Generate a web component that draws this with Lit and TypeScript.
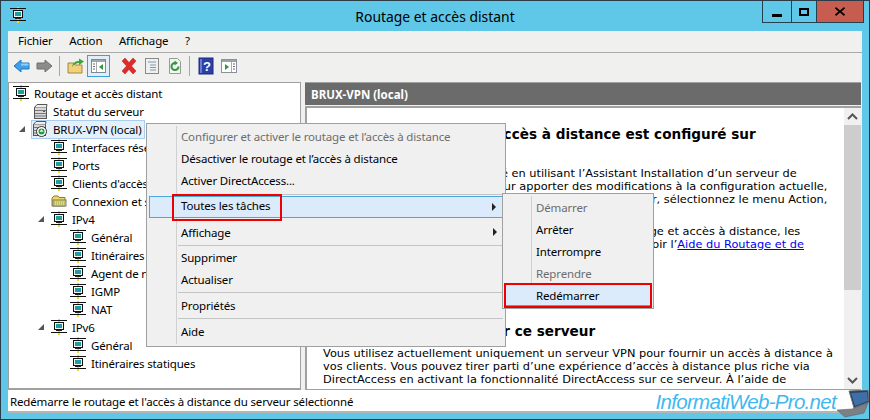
import { LitElement, html, css, svg } from "lit";
import { customElement } from "lit/decorators.js";

const netIcon = html`<svg class="ico" width="16" height="16" viewBox="0 0 16 16">
  <rect x="7" y="0" width="2" height="16" fill="#e8e020"/>
  <rect x="0" y="1" width="16" height="1" fill="#111"/>
  <rect x="3.5" y="3.5" width="9" height="7" fill="#f4f4f0" stroke="#111"/>
  <rect x="5" y="5" width="6" height="4" fill="#1f9c9c"/>
  <rect x="5" y="11" width="6" height="1" fill="#222"/>
  <rect x="0" y="13" width="16" height="1" fill="#111"/>
</svg>`;

const serverIcon = svg`<rect x="2.5" y="4.5" width="12" height="11" fill="#d8d8d8" stroke="#555"/>
  <path d="M2.5 4.5 5 1.5H15L14.5 4.5" fill="#eee" stroke="#555"/>
  <path d="M3 7.5H14M3 10.5H14M3 13H14" stroke="#777"/>
  <rect x="11" y="8" width="2" height="1" fill="#a33"/>`;

const statusIcon = html`<svg class="ico" width="16" height="16" viewBox="0 0 16 16">${serverIcon}</svg>`;

const bruxIcon = html`<svg class="ico" width="16" height="16" viewBox="0 0 16 16">
  <g transform="translate(-1 -1)">${serverIcon}</g>
  <circle cx="9.5" cy="10.5" r="5" fill="#fff" stroke="#333"/>
  <circle cx="9.5" cy="10.5" r="3" fill="#1d9a3a"/>
  <path d="M9.5 8.3 11.5 10.8H7.5Z" fill="#fff"/>
</svg>`;

const connIcon = html`<svg class="ico" width="16" height="16" viewBox="0 0 16 16">
  <path d="M1 5 3 3H7L8 4.5H14V13H1Z" fill="#f1d76a" stroke="#8d7a33"/>
  <rect x="2" y="7" width="13" height="6" fill="#e6e23a" stroke="#777"/>
  <path d="M3 9H14M3 11H14" stroke="#999" stroke-dasharray="1 1"/>
</svg>`;

const tools = {
  back: svg`<path d="M1 9 8 3V6H16V12H8V15Z" fill="#3f9fe8" stroke="#1e78c0"/><path d="M8 6.5H15.5V8.5H8Z" fill="#8fd0f8"/>`,
  forward: svg`<path d="M16 9 9 3V6H1V12H9V15Z" fill="#8c8c8c" stroke="#6f6f6f"/>`,
  up: svg`<path d="M1 6H7L8 8H15V16H1Z" fill="#efd27a" stroke="#a58a3e"/><path d="M5 10C6 5 9 4 12 4V1.500L17 4.500 12 8V6C10 6 7 7 5 10Z" fill="#3aa53a"/>`,
  tree: svg`<rect x="1.500" y="2.500" width="14" height="13" fill="#fff" stroke="#7c8a92"/><rect x="2" y="3" width="13" height="2" fill="#9aa8b0"/><path d="M6.500 5V15" stroke="#aaa"/><path d="M3 7H5M3 9.500H5M3 12H5" stroke="#667"/><path d="M13 7V13L9 10Z" fill="#2c9a3a"/>`,
  del: svg`<path d="M2 4 5 1 9 5.500 13 1 16 4 11.500 9 16 14 13 17 9 12.500 5 17 2 14 6.500 9Z" fill="#e02a2a" stroke="#b51c1c" stroke-width=".5"/>`,
  props: svg`<rect x="2.500" y="1.500" width="13" height="15" fill="#f0f0f0" stroke="#8a8a8a"/><path d="M5 5H13M7 8H13M7 10.500H13M7 13H13" stroke="#7d9ab0"/>`,
  refresh: svg`<path d="M3.500 1.500H11.500L14.500 4.500V16.500H3.500Z" fill="#f4f4f4" stroke="#999"/><path d="M12.500 9.500A3.500 3.500 0 1 1 9 6" fill="none" stroke="#2c9a3a" stroke-width="2"/><path d="M8.500 3.500 12 6 8.500 8.500Z" fill="#2c9a3a"/>`,
  help: svg`<rect x="2" y="1" width="14" height="16" fill="#2a3fa8" stroke="#1b2a7a"/><rect x="3" y="2" width="2" height="14" fill="#6d7bd0"/><text x="9.800" y="14" font-family="Liberation Sans" font-size="13" font-weight="700" fill="#fff" text-anchor="middle">?</text>`,
  action: svg`<rect x="1.500" y="2.500" width="15" height="13" fill="#fff" stroke="#8a9198"/><rect x="2" y="3" width="14" height="2" fill="#9aa4aa"/><path d="M11.500 5V15" stroke="#aaa"/><path d="M13 7H15M13 9.500H15M13 12H15" stroke="#667"/><path d="M5 7V13L9 10Z" fill="#2c9a3a"/>`,
};

const tool = (p: unknown, cls = "") =>
  html`<span class="tool ${cls}"><svg width="18" height="18" viewBox="0 0 18 18">${p}</svg></span>`;

type Row = { label: string; depth: number; icon: unknown; arrow?: boolean; selected?: boolean };

const rows: Row[] = [
  { label: "Routage et accès distant", depth: 0, icon: netIcon },
  { label: "Statut du serveur", depth: 1, icon: statusIcon },
  { label: "BRUX-VPN (local)", depth: 1, icon: bruxIcon, arrow: true, selected: true },
  { label: "Interfaces réseau", depth: 2, icon: netIcon },
  { label: "Ports", depth: 2, icon: netIcon },
  { label: "Clients d'accès distant", depth: 2, icon: netIcon },
  { label: "Connexion et stratégies", depth: 2, icon: connIcon },
  { label: "IPv4", depth: 2, icon: netIcon, arrow: true },
  { label: "Général", depth: 3, icon: netIcon },
  { label: "Itinéraires statiques", depth: 3, icon: netIcon },
  { label: "Agent de relais", depth: 3, icon: netIcon },
  { label: "IGMP", depth: 3, icon: netIcon },
  { label: "NAT", depth: 3, icon: netIcon },
  { label: "IPv6", depth: 2, icon: netIcon, arrow: true },
  { label: "Général", depth: 3, icon: netIcon },
  { label: "Itinéraires statiques", depth: 3, icon: netIcon },
];

@customElement("app-root")
export class AppRoot extends LitElement {
  static styles = css`
    :host {
      display: block;
      width: 870px;
      height: 420px;
      font-family: "Noto Sans", "Open Sans", sans-serif;
      font-size: 11.5px;
      letter-spacing: -0.15px;
      color: #000;
    }
    .window {
      position: relative;
      box-sizing: border-box;
      width: 870px;
      height: 420px;
      border: 1px solid #2b3c48;
      background: #5fc7e8;
      display: flex;
      flex-direction: column;
      padding: 0 7px 6px 7px;
      overflow: hidden;
    }
    .title {
      height: 30px;
      flex: none;
      display: flex;
      align-items: center;
      justify-content: center;
      font-size: 13.9px;
      letter-spacing: 0;
      position: relative;
    }
    .title .ico { position: absolute; left: 2px; top: 6px; }
    .caption {
      position: absolute;
      top: 0;
      right: -2px;
      display: flex;
      height: 21px;
      border: 1px solid #24404f;
      border-top: 0;
    }
    .caption span {
      display: flex;
      align-items: center;
      justify-content: center;
      width: 28px;
      border-right: 1px solid #24404f;
    }
    .caption span:nth-child(2) { width: 24px; }
    .caption span:last-child {
      width: 46px;
      border-right: 0;
      background: #c75c50;
    }
    .client {
      flex: 1;
      display: flex;
      flex-direction: column;
      background: #f0f0ee;
      min-height: 0;
    }
    .menu {
      height: 22px;
      display: flex;
      align-items: center;
      gap: 16.500px;
      padding: 0 0 2px 10px;
      box-sizing: border-box;
      border-bottom: 1px solid #aaa;
      flex: none;
    }
    .toolbar {
      height: 29px;
      flex: none;
      display: flex;
      align-items: center;
      padding: 0 0 3px 2px;
      box-sizing: border-box;
    }
    .tool {
      width: 23px;
      height: 22px;
      display: flex;
      align-items: center;
      justify-content: center;
      box-sizing: border-box;
    }
    .tool.on {
      background: #e1eefa;
      border: 1px solid #3c9fd8;
    }
    .sep {
      width: 1px;
      height: 20px;
      background: #a8a8a8;
      margin: 0 4px 0 3px;
    }
    .spacer { width: 7px; }
    .panes {
      flex: 1;
      display: flex;
      min-height: 0;
      gap: 4px;
    }
    .tree {
      width: 293px;
      flex: none;
      background: #fff;
      border: 1px solid #a0a0a0;
      border-width: 1px 1px 2px 1px;
      padding-top: 1px;
      box-sizing: border-box;
      overflow: hidden;
    }
    .row {
      height: 18px;
      display: flex;
      align-items: center;
      white-space: nowrap;
      position: relative;
    }
    .row .ico { flex: none; margin-right: 4px; }
    .row .text { padding: 0 1px; }
    .row.selected .wrap {
      display: flex;
      align-items: center;
      background: #e4f0fb;
      border: 1px solid #a9cdea;
      height: 17px;
      margin-left: -1px;
      padding-right: 2px;
    }
    .arrow { position: absolute; top: 5px; }
    .detail {
      flex: 1;
      min-width: 0;
      display: flex;
      flex-direction: column;
      border-top: 1px solid #a0a0a0;
      margin-right: 1px;
    }
    .head {
      height: 22px;
      flex: none;
      background: #6b6b6b;
      color: #fff;
      font-weight: 700;
      letter-spacing: 0;
      padding-left: 6px;
      display: flex;
      align-items: center;
    }
    .view {
      flex: 1;
      min-height: 0;
      margin-top: 1px;
      border: 2px solid #a0a0a0;
      border-right: 0;
      border-bottom: 1px solid #a0a0a0;
      background: #fff;
      display: flex;
    }
    .body {
      flex: 1;
      min-width: 0;
      overflow: hidden;
      padding: 17px 0 0 16px;
      font-family: "DejaVu Sans", sans-serif;
      font-size: 11.35px;
      letter-spacing: 0;
      line-height: 13px;
      white-space: nowrap;
    }
    .body h2 {
      margin: 0;
      font-size: 13.6px;
      line-height: 18px;
      font-weight: 700;
    }
    .body a { color: #0000ee; }
    .para1 { margin-top: 24px; }
    .para2 { margin-top: 19px; }
    .body .h2b { margin-top: 71px; }
    .para3 { margin-top: 7px; }
    .scroll {
      width: 17px;
      flex: none;
      background: #f0f0f0;
      display: flex;
      flex-direction: column;
    }
    .scroll .btn {
      height: 17px;
      flex: none;
      display: flex;
      align-items: center;
      justify-content: center;
    }
    .scroll .track { flex: 1; }
    .scroll .thumb { height: 165px; background: #cdcdcd; }
    .status {
      height: 23px;
      flex: none;
      background: #fff;
      display: flex;
      align-items: center;
      padding: 2px 0 0 2px;
      border-bottom: 2px solid #b5b5b5;
      box-sizing: border-box;
    }
    .ctx {
      position: absolute;
      background: #f0f0f0;
      border: 1px solid #a0a0a0;
      box-sizing: border-box;
      padding: 1px 2px;
      display: flex;
      flex-direction: column;
    }
    .ctx::before {
      content: "";
      position: absolute;
      top: 2px;
      bottom: 2px;
      left: 29px;
      width: 1px;
      background: #d0d0d0;
    }
    .ctx.main { left: 145px; top: 122px; width: 360px; height: 224px; }
    .ctx.sub { left: 501px; top: 192px; width: 152px; height: 116px; padding-top: 2px; }
    .ctx.sub::before { left: 28px; }
    .item {
      height: 22px;
      flex: none;
      display: flex;
      align-items: center;
      padding-left: 32px;
      position: relative;
      box-sizing: border-box;
      white-space: nowrap;
    }
    .sub .item { padding-left: 31px; }
    .item.off { color: #6d6d6d; }
    .item.hi {
      background: #dcebfb;
      border: 1px solid #4aa6dc;
      padding-left: 31px;
      padding-bottom: 3px;
    }
    .sub .item.hi { padding: 0 0 0 30px; }
    .item.after { margin-top: 3px; }
    .item .caret {
      position: absolute;
      right: 6px;
      top: 50%;
      margin-top: -4px;
      width: 0;
      height: 0;
      border-left: 4px solid #222;
      border-top: 4px solid transparent;
      border-bottom: 4px solid transparent;
    }
    .ctx hr {
      margin: 2px 0 1px 29px;
      border: 0;
      height: 1px;
      background: #c4c4c4;
      flex: none;
    }
    .ctx hr.first { margin-top: 3px; }
    .ctx hr.tight { margin: 2px 0 0 29px; }
    .mark {
      position: absolute;
      border: 2px solid #ee0000;
      box-sizing: border-box;
      pointer-events: none;
    }
    .mark.a { left: 171px; top: 193px; width: 110px; height: 27px; }
    .mark.b { left: 503px; top: 282px; width: 148px; height: 25px; }
    .brand {
      position: absolute;
      right: 33px;
      bottom: 5px;
      font-family: "Liberation Sans", sans-serif;
      font-style: italic;
      font-size: 20.5px;
      line-height: 24px;
      color: #3fb8f0;
      letter-spacing: -0.7px;
      white-space: nowrap;
      text-shadow: 0 0 2px #fff, 0 0 2px #fff;
    }
    .laptop { position: absolute; right: 0; bottom: 1px; }
  `;

  render() {
    return html`
      <div class="window">
        <div class="title">
          ${netIcon}
          <span>Routage et accès distant</span>
          <div class="caption">
            <span><svg width="10" height="10" viewBox="0 0 10 10"><rect y="7" width="10" height="3"/></svg></span>
            <span><svg width="10" height="8" viewBox="0 0 10 8"><path d="M1 1H9V7H1Z" fill="none" stroke="#000" stroke-width="2"/></svg></span>
            <span><svg width="10" height="9" viewBox="0 0 10 9"><path d="M1 0 5 3.500 9 0 10 1.500 6.500 4.500 10 7.500 9 9 5 5.500 1 9 0 7.500 3.500 4.500 0 1.500Z"/></svg></span>
          </div>
        </div>
        <div class="client">
          <div class="menu">
            <span>Fichier</span><span>Action</span><span>Affichage</span><span>?</span>
          </div>
          <div class="toolbar">
            ${tool(tools.back)}${tool(tools.forward)}<i class="sep"></i>
            ${tool(tools.up)}${tool(tools.tree, "on")}<i class="spacer"></i>
            ${tool(tools.del)}${tool(tools.props)}${tool(tools.refresh)}<i class="sep"></i>
            ${tool(tools.help)}${tool(tools.action)}
          </div>
          <div class="panes">
            <div class="tree">${rows.map((r) => this.renderRow(r))}</div>
            <div class="detail">
              <div class="head">BRUX-VPN (local)</div>
              <div class="view">
                <div class="body">
                  <h2>Le service Routage et accès à distance est configuré sur</h2>
                  <div class="para1">
                    <div>Ce serveur est ensuite configuré en utilisant l’Assistant Installation d’un serveur de</div>
                    <div>Routage et accès à distance. Pour apporter des modifications à la configuration actuelle,</div>
                    <div>ajouter des rôles ou modifier les paramètres de ce serveur, sélectionnez le menu Action,</div>
                  </div>
                  <div class="para2">
                    <div>Pour obtenir davantage d’informations à propos du Routage et accès à distance, les</div>
                    <div>Scénarios de déploiement et la résolution des incidents, voir l’<a href="#">Aide du Routage et de</a></div>
                  </div>
                  <h2 class="h2b">Activer DirectAccess sur ce serveur</h2>
                  <div class="para3">
                    <div>Vous utilisez actuellement uniquement un serveur VPN pour fournir un accès à distance à</div>
                    <div>vos clients. Vous pouvez tirer parti d’une expérience d’accès à distance plus riche via</div>
                    <div>DirectAccess en activant la fonctionnalité DirectAccess sur ce serveur. À l’aide de</div>
                  </div>
                </div>
                <div class="scroll">
                  <div class="btn"><svg width="11" height="7" viewBox="0 0 11 7"><path d="M1 6 5.500 1.500 10 6" fill="none" stroke="#555" stroke-width="2"/></svg></div>
                  <div class="thumb"></div>
                  <div class="track"></div>
                  <div class="btn"><svg width="11" height="7" viewBox="0 0 11 7"><path d="M1 1 5.500 5.500 10 1" fill="none" stroke="#555" stroke-width="2"/></svg></div>
                </div>
              </div>
            </div>
          </div>
          <div class="status">Redémarre le routage et l'accès à distance du serveur sélectionné</div>
        </div>

        <div class="ctx main">
          <div class="item off">Configurer et activer le routage et l’accès à distance</div>
          <div class="item">Désactiver le routage et l’accès à distance</div>
          <div class="item">Activer DirectAccess...</div>
          <hr class="first" />
          <div class="item hi">Toutes les tâches<i class="caret"></i></div>
          <div class="item after">Affichage<i class="caret"></i></div>
          <hr class="tight" />
          <div class="item">Supprimer</div>
          <div class="item">Actualiser</div>
          <hr />
          <div class="item">Propriétés</div>
          <hr />
          <div class="item">Aide</div>
        </div>
        <div class="ctx sub">
          <div class="item off">Démarrer</div>
          <div class="item">Arrêter</div>
          <div class="item">Interrompre</div>
          <div class="item off">Reprendre</div>
          <div class="item hi">Redémarrer</div>
        </div>
        <div class="mark a"></div>
        <div class="mark b"></div>

        <div class="brand">InformatiWeb-Pro.net</div>
        <svg class="laptop" width="32" height="28" viewBox="0 0 32 28">
          <path d="M12 1 31 0 32 12 17 18Z" fill="#27415c" stroke="#6a7078"/>
          <path d="M14 3 30 2 31 11 18 16Z" fill="#3f6fa8"/>
          <path d="M0 20 15 19 31 13 27 23 8 27Z" fill="#7c7f84" stroke="#55585c" stroke-width=".5"/>
        </svg>
      </div>
    `;
  }

  renderRow(r: Row) {
    const indent = [4, 23, 42, 61][r.depth];
    const inner = html`${r.icon}<span class="text">${r.label}</span>`;
    return html`<div class="row ${r.selected ? "selected" : ""}" style="padding-left:${indent}px">
      ${r.arrow
        ? html`<svg class="arrow" style="left:${indent - 14}px" width="8" height="8" viewBox="0 0 8 8"><path d="M7 1V7H1Z" fill="#555"/></svg>`
        : ""}
      ${r.selected ? html`<span class="wrap">${inner}</span>` : inner}
    </div>`;
  }
}
